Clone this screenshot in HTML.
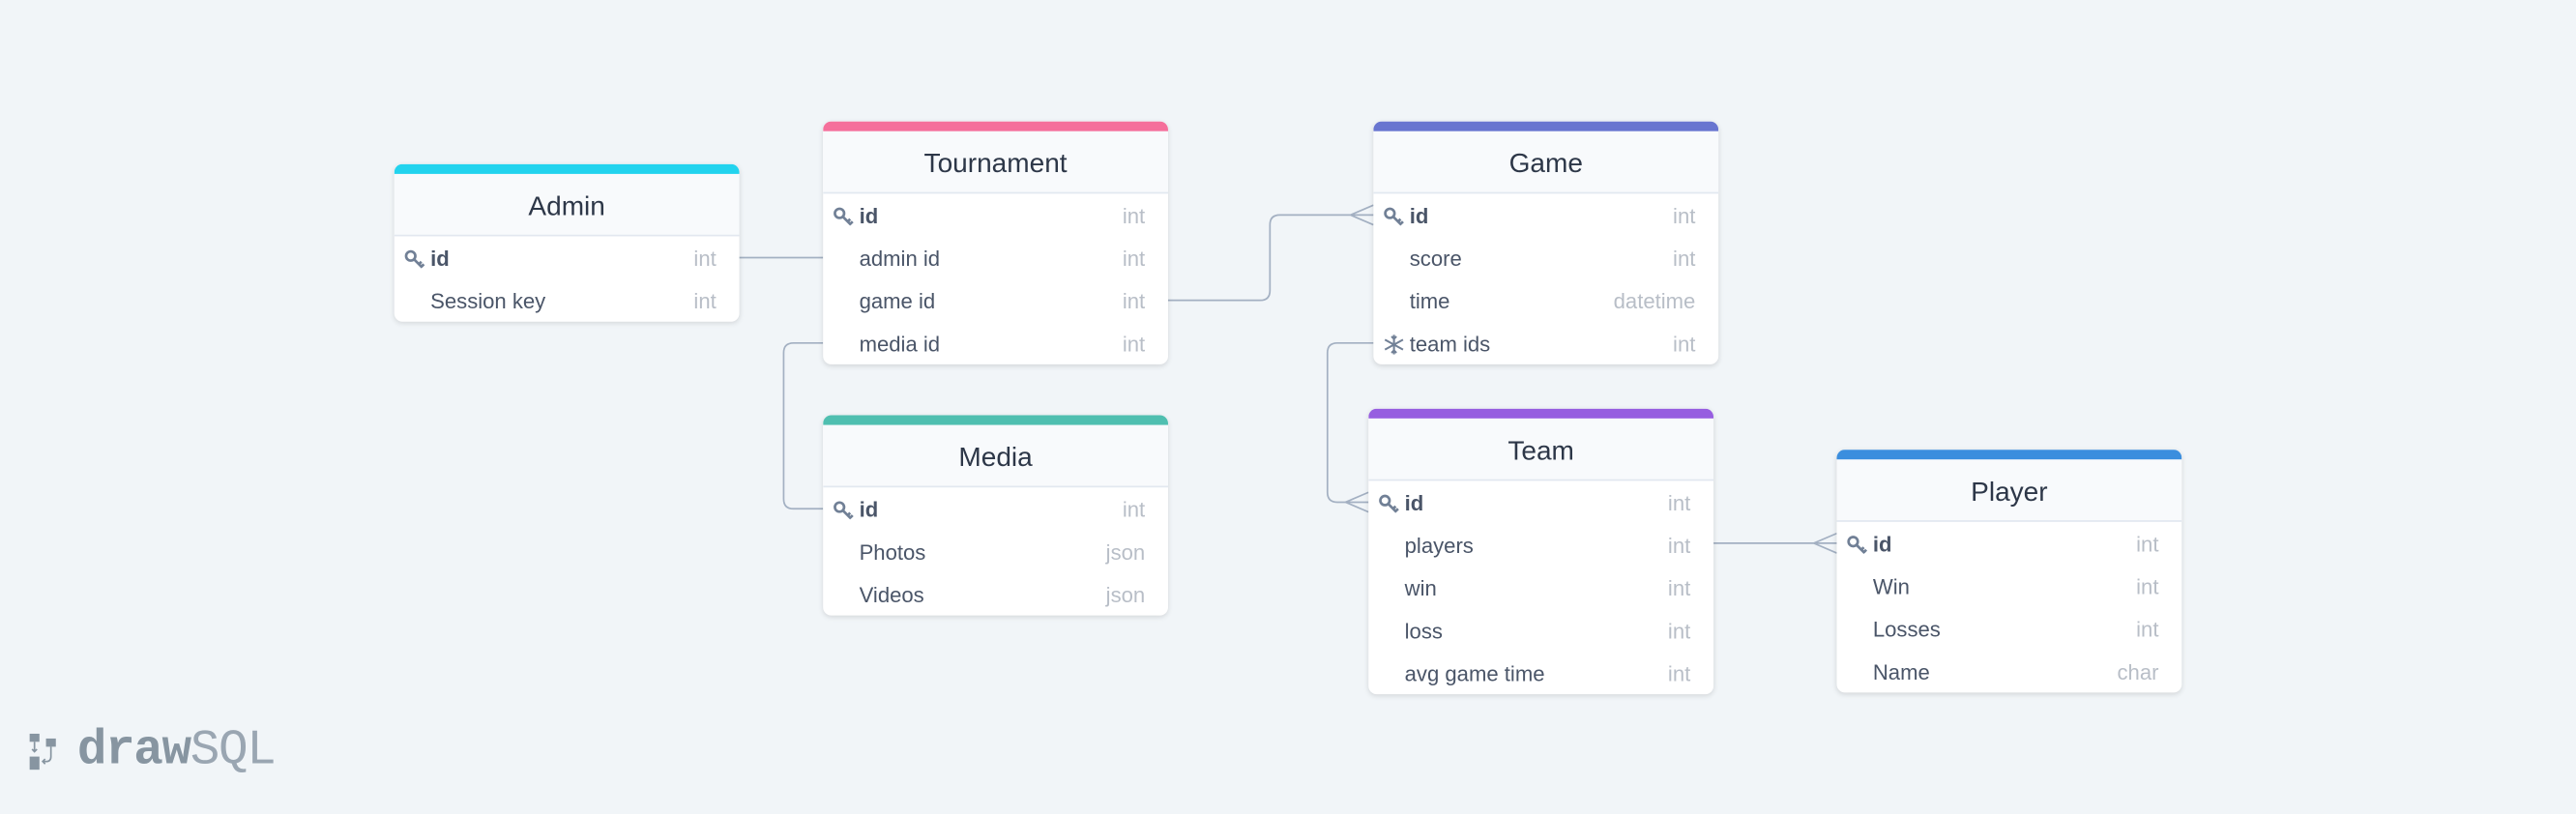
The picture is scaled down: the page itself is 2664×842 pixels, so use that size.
<!DOCTYPE html>
<html><head><meta charset="utf-8"><style>
html,body{margin:0;padding:0;background:#f1f5f8;width:2664px;height:842px;overflow:hidden}
#s{position:absolute;left:0;top:0;width:1568px;height:496px;transform:scale(1.699,1.6976);transform-origin:0 0;font-family:"Liberation Sans",sans-serif}
.t{position:absolute;width:210px;background:#fff;border-radius:5px;box-shadow:0 1px 3px rgba(0,0,0,.12);overflow:hidden}
.bar{height:6px}
.h{height:37px;background:#f8fafc;border-bottom:1px solid #e2e8f0;text-align:center;line-height:41px;font-size:16.5px;color:#2d3748}
.r{height:26px;line-height:28px;font-size:13px;color:#4a5568;position:relative;padding-left:22px}
.r .ty{position:absolute;right:14px;top:0;color:#b8bec7}
.r.pk{font-weight:bold}
.r .ic{position:absolute;left:6px;top:8px;width:13px;height:12px}
svg.l{position:absolute;left:0;top:0}
</style></head><body><div id="s">
<svg class="l" width="1568" height="496" fill="none" stroke="#a3b0c2" stroke-width="1">
<path d="M450 157H501"/>
<path d="M711 183H767Q773 183 773 177V137Q773 131 779 131H836M822 131L836 125M822 131L836 137"/>
<path d="M501 209H483Q477 209 477 215V304Q477 310 483 310H501"/>
<path d="M836 209H814Q808 209 808 215V300Q808 306 814 306H833M819 306L833 300M819 306L833 312"/>
<path d="M1043 331H1118M1104 331L1118 325M1104 331L1118 337"/>
</svg>
<svg width="0" height="0" style="position:absolute"><defs>
<symbol id="k" viewBox="0 0 13 12"><circle cx="4" cy="4" r="2.8" fill="none" stroke="#718096" stroke-width="1.6"/><path d="M6 6L11 11M9 9L10.5 7.5M10.5 10.5L12 9" stroke="#718096" stroke-width="1.6" fill="none"/></symbol>
<symbol id="f" viewBox="0 0 13 12"><path d="M6.5 0V12M1 3L12 9M1 9L12 3M5 1L6.5 2.5L8 1M5 11L6.5 9.5L8 11" stroke="#718096" stroke-width="1.2" fill="none"/></symbol>
</defs></svg>

<div class="t" style="left:240px;top:100px"><div class="bar" style="background:#22d3ee"></div><div class="h">Admin</div>
<div class="r pk"><svg class="ic"><use href="#k"/></svg>id<span class="ty" style="font-weight:normal">int</span></div>
<div class="r">Session key<span class="ty">int</span></div></div>

<div class="t" style="left:501px;top:74px"><div class="bar" style="background:#f56f9b"></div><div class="h">Tournament</div>
<div class="r pk"><svg class="ic"><use href="#k"/></svg>id<span class="ty" style="font-weight:normal">int</span></div>
<div class="r">admin id<span class="ty">int</span></div>
<div class="r">game id<span class="ty">int</span></div>
<div class="r">media id<span class="ty">int</span></div></div>

<div class="t" style="left:501px;top:253px"><div class="bar" style="background:#4fbfb0"></div><div class="h">Media</div>
<div class="r pk"><svg class="ic"><use href="#k"/></svg>id<span class="ty" style="font-weight:normal">int</span></div>
<div class="r">Photos<span class="ty">json</span></div>
<div class="r">Videos<span class="ty">json</span></div></div>

<div class="t" style="left:836px;top:74px"><div class="bar" style="background:#6875d0"></div><div class="h">Game</div>
<div class="r pk"><svg class="ic"><use href="#k"/></svg>id<span class="ty" style="font-weight:normal">int</span></div>
<div class="r">score<span class="ty">int</span></div>
<div class="r">time<span class="ty">datetime</span></div>
<div class="r"><svg class="ic"><use href="#f"/></svg>team ids<span class="ty">int</span></div></div>

<div class="t" style="left:833px;top:249px"><div class="bar" style="background:#975ee0"></div><div class="h">Team</div>
<div class="r pk"><svg class="ic"><use href="#k"/></svg>id<span class="ty" style="font-weight:normal">int</span></div>
<div class="r">players<span class="ty">int</span></div>
<div class="r">win<span class="ty">int</span></div>
<div class="r">loss<span class="ty">int</span></div>
<div class="r">avg game time<span class="ty">int</span></div></div>

<div class="t" style="left:1118px;top:274px"><div class="bar" style="background:#3b8ede"></div><div class="h">Player</div>
<div class="r pk"><svg class="ic"><use href="#k"/></svg>id<span class="ty" style="font-weight:normal">int</span></div>
<div class="r">Win<span class="ty">int</span></div>
<div class="r">Losses<span class="ty">int</span></div>
<div class="r">Name<span class="ty">char</span></div></div>

<svg style="position:absolute;left:18px;top:447px" width="22" height="26" fill="#8795a1" stroke="none">
<rect x="0" y="0" width="6" height="5"/><rect x="0" y="14" width="6" height="8"/><rect x="10" y="3" width="6" height="5"/>
<path d="M3 5V11M1.5 9.5L3 11L4.5 9.5" stroke="#8795a1" stroke-width="1" fill="none"/>
<path d="M13 8V14Q13 17 10 17H8M9.5 15.5L8 17L9.5 18.5" stroke="#8795a1" stroke-width="1" fill="none"/>
</svg>
<div style="position:absolute;left:47px;top:441px;font-family:'Liberation Mono',monospace;font-size:30px;color:#8795a1;line-height:34px;letter-spacing:-0.8px"><b>draw</b><span style="font-weight:normal;color:#9aa6b2">SQL</span></div>
</div></body></html>
